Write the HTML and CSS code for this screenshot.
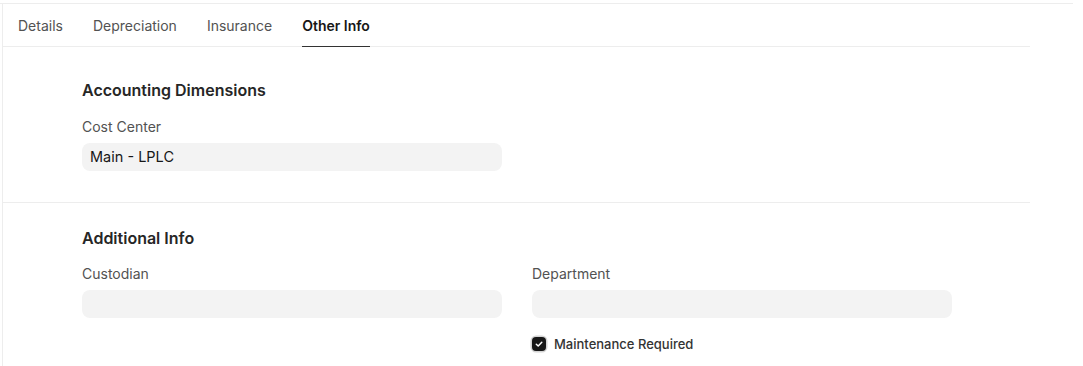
FILE: index.html
```html
<!DOCTYPE html>
<html lang="en">
<head>
<meta charset="UTF-8">
<title>Asset - Other Info</title>
<link rel="stylesheet" href="styles.css">
</head>
<body>

<div class="page-top"></div>

<div class="form-card">
  <div class="tabs">
    <a class="tab">Details</a>
    <a class="tab">Depreciation</a>
    <a class="tab">Insurance</a>
    <a class="tab active">Other Info</a>
  </div>

  <div class="section first">
    <h3 class="section-title">Accounting Dimensions</h3>
    <div class="cols">
      <div class="field">
        <label>Cost Center</label>
        <div class="control">Main - LPLC</div>
      </div>
      <div></div>
    </div>
  </div>

  <div class="section">
    <h3 class="section-title">Additional Info</h3>
    <div class="cols">
      <div class="field">
        <label>Custodian</label>
        <div class="control"></div>
      </div>
      <div class="field">
        <label>Department</label>
        <div class="control"></div>
        <div class="check">
          <span class="box">
            <svg width="10" height="10" viewBox="0 0 10 10"><path d="M2.3 5.2 L4.2 7 L7.8 3.2" fill="none" stroke="#fff" stroke-width="1.5" stroke-linecap="round" stroke-linejoin="round"/></svg>
          </span>
          <span class="check-label">Maintenance Required</span>
        </div>
      </div>
    </div>
  </div>
</div>

</body>
</html>
```

FILE: styles.css
```css
body {
  margin: 0;
  font-family: Inter, "Noto Sans", sans-serif;
  background-color: #fff;
  color: #171717;
  overflow: hidden;
}

.page-top {
  width: 1073px;
  height: 3px;
  border-bottom: 1px solid #ededed;
}

.form-card {
  margin-left: 2px;
  width: 1027px;
  height: calc(100vh - 4px);
  border-left: 1px solid #ededed;
}

.tabs {
  display: flex;
  gap: 30px;
  padding-left: 15px;
  height: 42px;
  border-bottom: 1px solid #ededed;
}

.tab {
  display: flex;
  align-items: center;
  font-size: 14px;
  color: #525252;
  border-bottom: 1px solid transparent;
  margin-bottom: -1px;
  padding-top: 1px;
}

.tab.active {
  color: #171717;
  font-weight: 600;
  border-bottom: 1px solid #333;
}

.section {
  padding: 25px 78px 0 79px;
}

.section.first {
  padding-top: 33px;
  padding-bottom: 31px;
  border-bottom: 1px solid #ededed;
}

.section-title {
  margin: 0 0 16px 0;
  font-size: 16px;
  line-height: 20px;
  font-weight: 600;
  color: #262626;
}

.first .section-title {
  margin-bottom: 17px;
}

.cols {
  display: grid;
  grid-template-columns: 420px 420px;
  gap: 30px;
}

.field label {
  display: block;
  font-size: 14px;
  line-height: 20px;
  color: #525252;
  margin-bottom: 6px;
}

.control {
  height: 28px;
  line-height: 28px;
  border-radius: 8px;
  background-color: #f3f3f3;
  padding: 0 8px;
  font-size: 14.5px;
  color: #171717;
}

.check {
  display: flex;
  align-items: center;
  gap: 8px;
  margin-top: 18px;
}

.box {
  width: 14px;
  height: 14px;
  border-radius: 4px;
  background-color: #171717;
  box-shadow: 0 0 0 1.5px #d4d4d4;
  display: flex;
  align-items: center;
  justify-content: center;
}

.check-label {
  font-size: 13px;
  font-weight: 500;
  color: #333;
}
```
